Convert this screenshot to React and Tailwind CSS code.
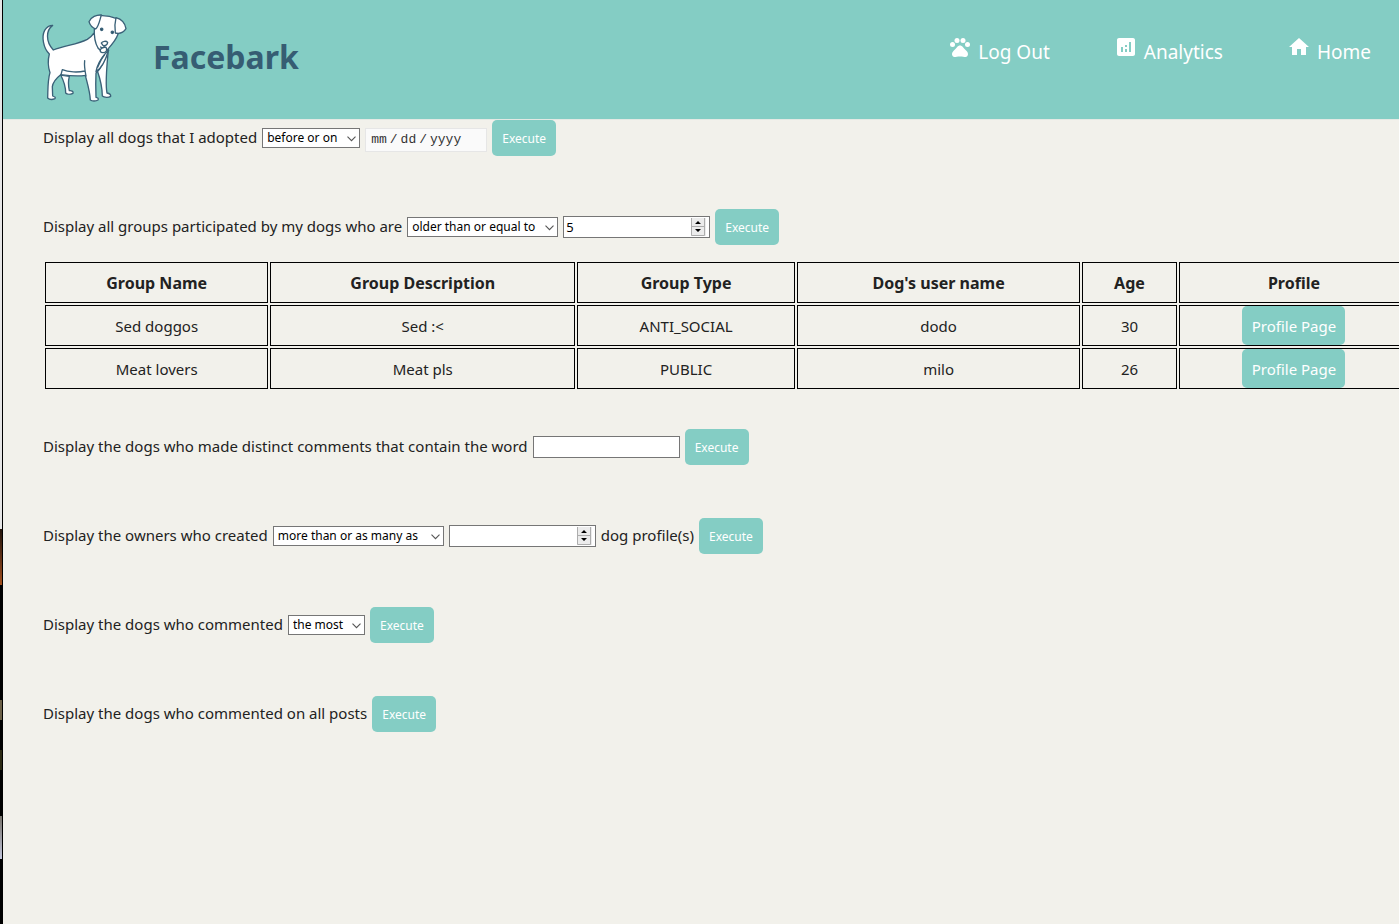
import { MdPets, MdAnalytics, MdHome } from "react-icons/md";

function DogLogo() {
  return (
    <svg
      viewBox="120 36 264 276"
      className="h-[92px] w-[88px] shrink-0"
      fill="#ffffff"
      stroke="#3a6178"
      strokeWidth="4"
      strokeLinejoin="round"
      strokeLinecap="round"
      role="img"
      aria-label="Facebark dog"
    >
      <path d="M182 225 C190 240 197 258 197 279 C201 284 212 283 219 280 C221 274 214 271 208 272 C205 258 204 244 208 229 Z" />
      <path d="M292 212 C300 235 307 262 307 288 C313 293 326 293 332 289 C333 283 326 280 321 279 C316 255 321 190 325 150 L300 160 Z" />
      <path d="M148 162 C130 145 124 110 134 91 C140 81 150 76 158 76 C138 90 136 125 160 150 C195 137 235 132 262 118 C270 113 276 108 281 100 L325 150 C318 172 308 205 288 219 C287 240 287 265 288 292 C293 293 297 295 294 300 C288 304 276 304 271 300 C270 275 262 250 256 226 C235 230 205 227 182 224 C168 235 159 245 157 260 L158 288 C163 290 168 292 165 296 C158 299 148 299 143 294 C144 265 143 240 150 218 C143 198 144 178 148 162 Z" />
      <path d="M254 182 C252 200 256 218 258 228 M187 209 C205 217 235 218 254 213 M187 209 L183 224" fill="none" />
      <path d="M325 151 C318 178 304 204 288 215 C291 198 303 175 318 158 Z" />
      <path d="M314 164 C305 175 300 184 293 202" fill="none" />
      <path d="M299 47 C315 46 332 48 348 55 C356 69 358 88 354 103 C348 120 334 136 323 148 C315 157 302 155 294 144 C286 130 282 105 283 86 Z" />
      <path d="M304 45 C290 44 273 51 267 65 C270 76 279 84 287 87 C296 80 299 61 304 45 Z" />
      <path d="M348 53 C363 57 375 69 378 86 C371 97 358 102 346 99 C344 85 344 69 348 53 Z" />
      <path d="M304 129 C307 123 319 122 323 127 C323 134 315 139 309 136 Z M313 137 L311 143 M302 141 C306 146 310 142 314 142 C319 140 321 146 319 153 C315 159 304 160 301 154 C300 149 303 145 306 145 M320 148 L326 151" />
      <circle cx="305" cy="88" r="3.5" fill="#244e62" />
      <circle cx="337" cy="97" r="3.5" fill="#244e62" />
    </svg>
  );
}

function NavLink({ icon: Icon, children }) {
  return (
    <a href="#" className="flex items-start gap-1.5 text-[19px] leading-[34px] text-white">
      <Icon className="size-6" aria-hidden="true" />
      {children}
    </a>
  );
}

function Choice({ label, options, className }) {
  return (
    <span className={`relative inline-flex ${className}`}>
      <select
        aria-label={label}
        className="h-5 w-full appearance-none border border-[#767676] bg-white pl-1 text-xs text-black"
      >
        {options.map((option) => (
          <option key={option}>{option}</option>
        ))}
      </select>
      <svg
        viewBox="0 0 9 6"
        className="pointer-events-none absolute top-2 right-1 h-1.5 w-[9px]"
        fill="none"
        stroke="#555555"
        strokeWidth="1.1"
      >
        <path d="M0.5 0.7 L4.5 4.7 L8.5 0.7" />
      </svg>
    </span>
  );
}

const fieldClass =
  "h-[22px] w-[147px] border border-[#767676] bg-white px-0.5 text-[13px] leading-4 text-black";

function NumberField({ label, value }) {
  return (
    <span className="relative inline-flex">
      <input
        type="number"
        aria-label={label}
        defaultValue={value}
        className={`${fieldClass} [appearance:textfield] [&::-webkit-inner-spin-button]:appearance-none`}
      />
      <svg viewBox="0 0 15 18" className="pointer-events-none absolute top-0.5 right-1 h-[18px] w-[15px]">
        <path d="M0 0H15V18H0Z" fill="#ececec" />
        <path d="M0.5 0V17.5H13.5V0M0 8.5H14" fill="none" stroke="#adadad" />
        <path d="M4 6L7 3L10 6ZM4 11L7 14L10 11Z" fill="#000000" />
      </svg>
    </span>
  );
}

function Execute() {
  return (
    <button type="button" className="h-9 w-16 rounded-[5px] bg-[#84cdc4] pt-0.5 text-xs text-white">
      Execute
    </button>
  );
}

function Query({ children }) {
  return <form className="flex h-9 items-center gap-[5px] whitespace-nowrap">{children}</form>;
}

function Phrase({ htmlFor, children }) {
  const Tag = htmlFor ? "label" : "span";
  return (
    <Tag htmlFor={htmlFor} className="pb-0.5">
      {children}
    </Tag>
  );
}

const groups = [
  ["Sed doggos", "Sed :<", "ANTI_SOCIAL", "dodo", "30"],
  ["Meat lovers", "Meat pls", "PUBLIC", "milo", "26"],
];

function GroupTable() {
  return (
    <table className="mt-[15px] mb-[38px] w-full table-fixed border-separate border-spacing-[2px] text-center">
      <colgroup>
        <col className="w-[16.5%]" />
        <col className="w-[22.5%]" />
        <col className="w-[16.1%]" />
        <col className="w-[20.9%]" />
        <col className="w-[7%]" />
        <col />
      </colgroup>
      <thead>
        <tr className="h-[41px]">
          {["Group Name", "Group Description", "Group Type", "Dog's user name", "Age", "Profile"].map((name) => (
            <th key={name} scope="col" className="border border-black p-0 text-base font-bold">
              {name}
            </th>
          ))}
        </tr>
      </thead>
      <tbody>
        {groups.map((group) => (
          <tr key={group[0]} className="h-[41px]">
            {group.map((value) => (
              <td key={value} className="border border-black p-0">
                {value}
              </td>
            ))}
            <td className="border border-black p-0">
              <a href="#" className="mx-auto block h-[39px] w-[103px] rounded-[5px] bg-[#84cdc4] leading-[40px] text-white">
                Profile Page
              </a>
            </td>
          </tr>
        ))}
      </tbody>
    </table>
  );
}

export default function App() {
  return (
    <div className="flex min-h-screen overflow-hidden bg-[#f2f1eb] font-[Tahoma,'Noto_Sans',sans-serif] text-[15px] leading-6 text-[#222222]">
      <div className="flex w-[3px] shrink-0 flex-col border-r border-black bg-black" aria-hidden="true">
        <div className="h-[529px] bg-[#e6e6e6]" />
        <div className="h-14 bg-linear-to-b from-[#24150c] to-[#a34f1c]" />
        <div className="mt-[115px] h-5 bg-[#6b6047]" />
        <div className="mt-[30px] h-5 bg-[#2c2a14]" />
        <div className="mt-[46px] h-[43px] bg-linear-to-b from-[#77736b] to-[#c3c6dc]" />
      </div>
      <div className="min-w-0 flex-1">
        <header className="flex h-[120px] items-start border-b border-[#e4e9e4] bg-[#84cdc4] pt-3 pr-7 pl-[37px]">
          <DogLogo />
          <h1 className="mt-5 ml-[25px] text-[32px] leading-[50px] font-bold text-[#365d73]">Facebark</h1>
          <nav className="mt-[23px] ml-auto flex gap-16">
            <NavLink icon={MdPets}>Log Out</NavLink>
            <NavLink icon={MdAnalytics}>Analytics</NavLink>
            <NavLink icon={MdHome}>Home</NavLink>
          </nav>
        </header>
        <main className="ml-10 w-[98%]">
          <Query>
            <Phrase>Display all dogs that I adopted</Phrase>
            <Choice label="Adoption date comparison" options={["before or on", "after or on"]} className="w-[98px]" />
            <input
              type="date"
              aria-label="Adoption date"
              className="mt-1 h-6 w-[122px] border border-[#e6e6e6] bg-[#fafafa] px-1 font-['Courier_New','Liberation_Mono',monospace] text-[13px] text-[#333333] [&::-webkit-calendar-picker-indicator]:hidden [&::-webkit-datetime-edit-text]:px-0.5"
            />
            <Execute />
          </Query>
          <div className="mt-[53px]">
            <Query>
              <Phrase>Display all groups participated by my dogs who are</Phrase>
              <Choice label="Age comparison" options={["older than or equal to", "younger than or equal to"]} className="w-[151px]" />
              <NumberField label="Age" value="5" />
              <Execute />
            </Query>
            <GroupTable />
          </div>
          <div className="flex flex-col gap-[53px]">
            <Query>
              <Phrase htmlFor="word">Display the dogs who made distinct comments that contain the word</Phrase>
              <input id="word" type="text" className={fieldClass} />
              <Execute />
            </Query>
            <Query>
              <Phrase>Display the owners who created</Phrase>
              <Choice label="Profile count comparison" options={["more than or as many as", "less than or as many as"]} className="w-[171px]" />
              <NumberField label="Number of dog profiles" />
              <Phrase>dog profile(s)</Phrase>
              <Execute />
            </Query>
            <Query>
              <Phrase>Display the dogs who commented</Phrase>
              <Choice label="Comment ranking" options={["the most", "the least"]} className="w-[77px]" />
              <Execute />
            </Query>
            <Query>
              <Phrase>Display the dogs who commented on all posts</Phrase>
              <Execute />
            </Query>
          </div>
        </main>
      </div>
    </div>
  );
}
